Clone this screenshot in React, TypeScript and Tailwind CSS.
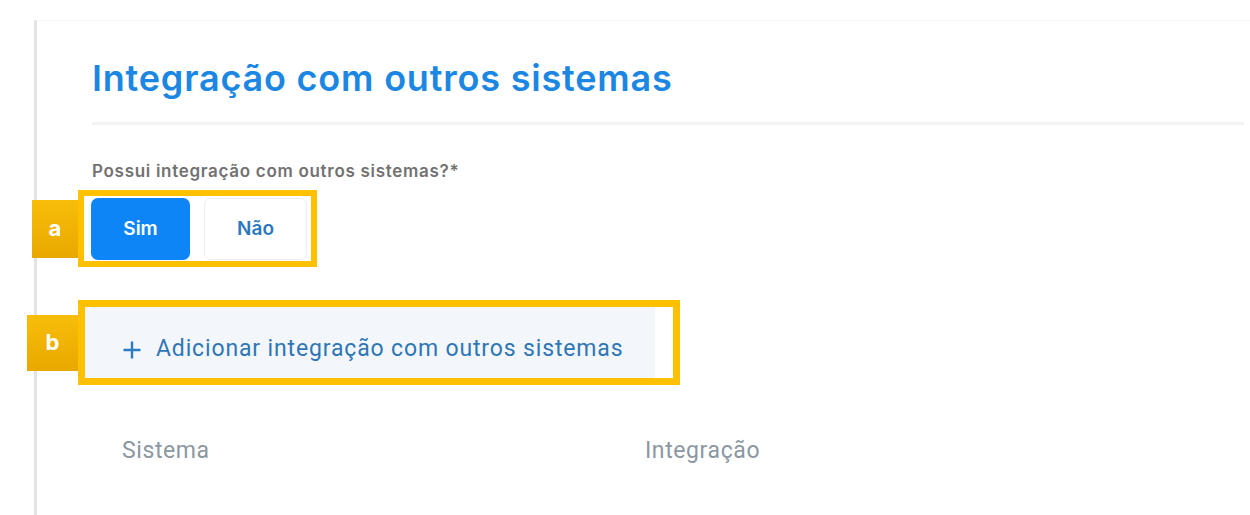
import React from 'react';

const Tab = ({ letter, className }: { letter: string; className: string }) => (
  <div
    className={`flex items-center justify-center bg-gradient-to-b from-[#f8bd0a] to-[#e9a800] text-white font-bold text-[22px] ${className}`}
  >
    {letter}
  </div>
);

export default function App() {
  return (
    <div className="min-h-[515px] bg-white pt-[20px] pl-[34px] font-['Inter',sans-serif]">
      <div className="min-h-[495px] border-l-[3px] border-t border-l-[#e3e3e3] border-t-[#f4f4f4] pl-[55px] pr-[6px]">
        <h1 className="pt-[35px] text-[36px] leading-[44px] font-semibold text-[#1c87e2] tracking-[0.8px]">
          Integração com outros sistemas
        </h1>
        <div className="mt-[22px] h-[3px] bg-[#f3f3f3]" />

        <p className="mt-[36px] text-[17px] leading-[20px] font-semibold text-[#727272] tracking-[0.7px]">
          Possui integração com outros sistemas?*
        </p>

        {/* a: toggle */}
        <div className="-ml-[60px] mt-[9px] flex items-center">
          <Tab letter="a" className="w-[46px] h-[58px]" />
          <div className="flex gap-[14px] border-[6px] border-[#ffc000] pl-[7px] pr-[4px] pt-[2px] pb-[1px]">
            <button className="w-[99px] h-[62px] rounded-[7px] bg-[#0d85f7] text-white text-[19px] font-semibold">
              Sim
            </button>
            <button className="w-[103px] h-[62px] rounded-[7px] bg-white border border-[#eeeeee] text-[#2b78bf] text-[19px] font-semibold">
              Não
            </button>
          </div>
        </div>

        {/* b: add button */}
        <div className="-ml-[65px] mt-[33px] flex items-center">
          <Tab letter="b" className="w-[51px] h-[56px]" />
          <div className="border-[7px] border-[#ffc000] pr-[18px]">
            <button className="flex items-center gap-[14px] w-[570px] h-[71px] bg-[#f3f7fc] pl-[37px] pt-[14px] font-['Roboto',sans-serif] text-[23px] tracking-[0.85px] text-[#2f76b6]">
              <svg width="20" height="20" viewBox="0 0 20 20" className="text-[#2b7bc2]">
                <path d="M10 1.5v17M1.5 10h17" stroke="currentColor" strokeWidth="2.4" />
              </svg>
              Adicionar integração com outros sistemas
            </button>
          </div>
        </div>

        {/* table header */}
        <div className="mt-[49px] flex font-['Roboto',sans-serif] text-[23px] tracking-[0.6px] text-[#8b97a1]">
          <div className="w-[553px] pl-[30px]">Sistema</div>
          <div>Integração</div>
        </div>
      </div>
    </div>
  );
}
